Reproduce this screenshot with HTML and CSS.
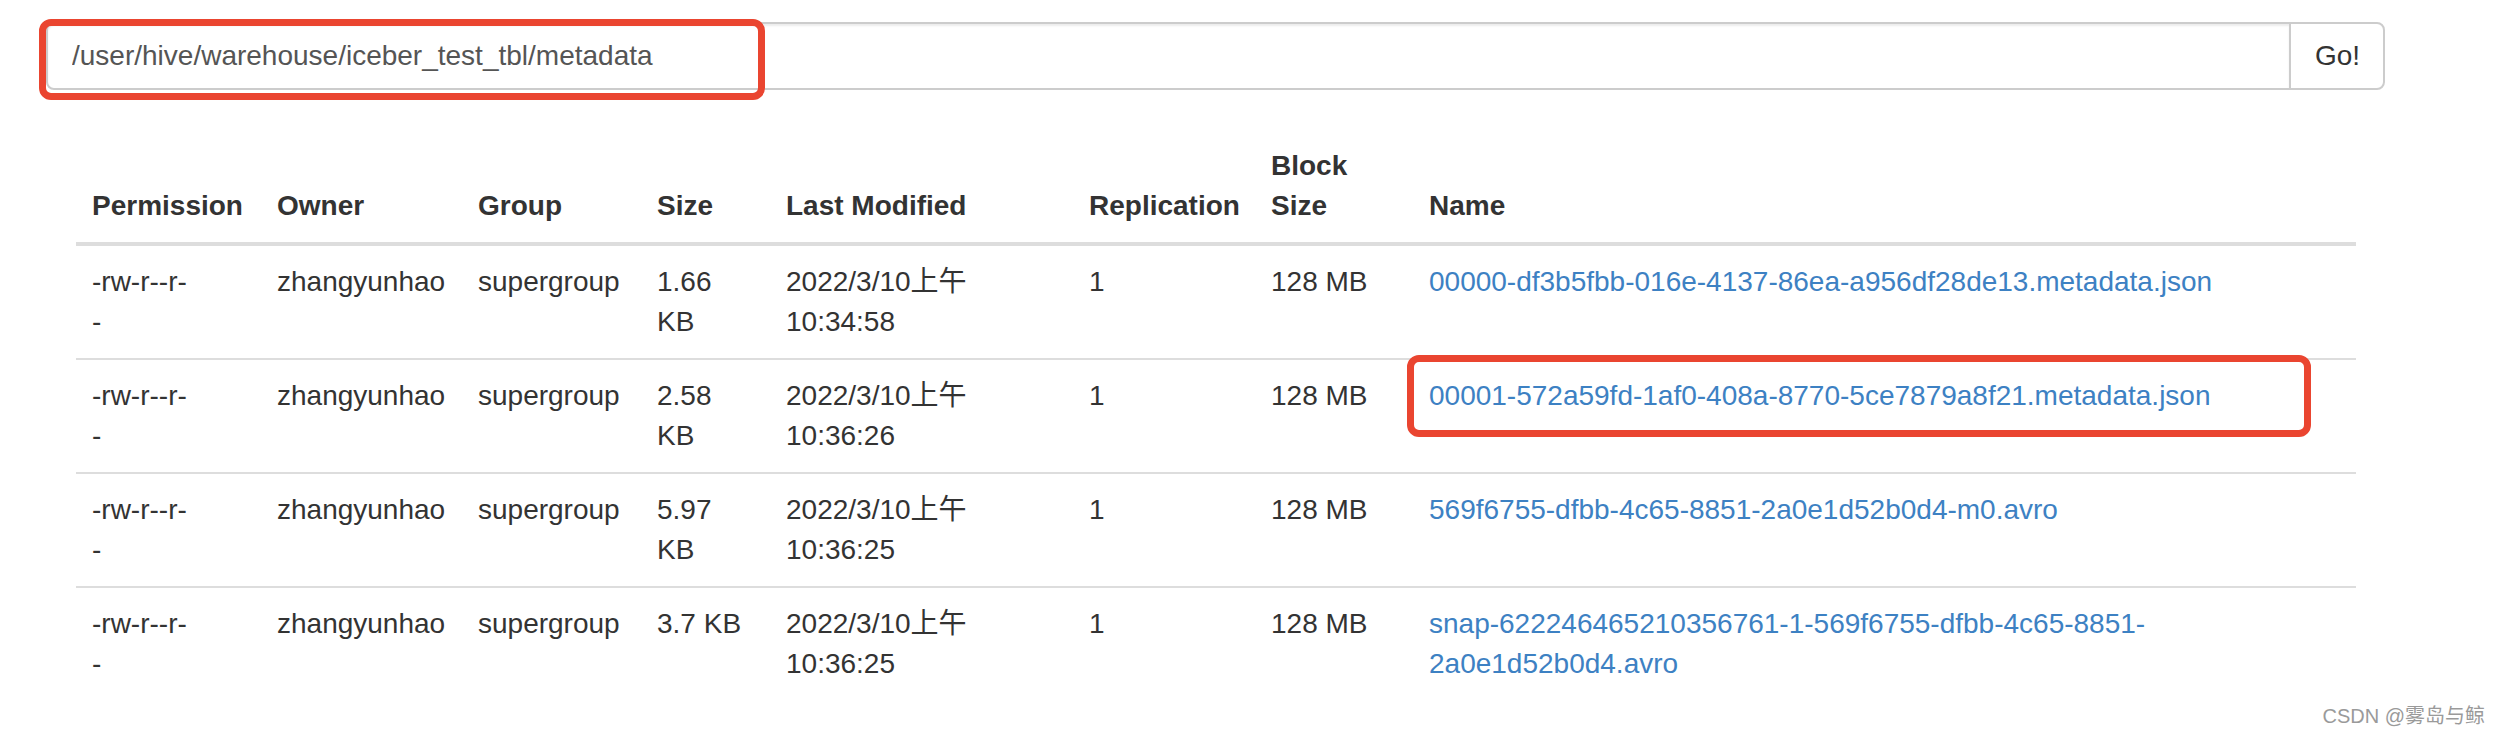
FILE: index.html
```html
<!DOCTYPE html>
<html lang="zh-CN">
<head>
  <meta charset="UTF-8">
  <title>Browse Directory</title>
  <link rel="stylesheet" href="styles.css">
</head>
<body>

<div id="page">
  <!-- 경로 입력 -->
  <div class="input-group">
    <input type="text" class="form-control" id="directory" value="/user/hive/warehouse/iceber_test_tbl/metadata">
    <button class="btn" type="button">Go!</button>
  </div>

  <!-- 파일 목록 -->
  <table id="table-explorer">
    <thead>
      <tr>
        <th class="col-perm">Permission</th>
        <th class="col-owner">Owner</th>
        <th class="col-group">Group</th>
        <th class="col-size">Size</th>
        <th class="col-mod">Last Modified</th>
        <th class="col-repl">Replication</th>
        <th class="col-block">Block Size</th>
        <th class="col-name">Name</th>
      </tr>
    </thead>
    <tbody>
      <tr>
        <td><span class="perm">-rw-r--r--</span></td>
        <td>zhangyunhao</td>
        <td>supergroup</td>
        <td>1.66 KB</td>
        <td>2022/3/10上午10:34:58</td>
        <td>1</td>
        <td>128 MB</td>
        <td><a href="#">00000-df3b5fbb-016e-4137-86ea-a956df28de13.metadata.json</a></td>
      </tr>
      <tr>
        <td><span class="perm">-rw-r--r--</span></td>
        <td>zhangyunhao</td>
        <td>supergroup</td>
        <td>2.58 KB</td>
        <td>2022/3/10上午10:36:26</td>
        <td>1</td>
        <td>128 MB</td>
        <td><a href="#">00001-572a59fd-1af0-408a-8770-5ce7879a8f21.metadata.json</a></td>
      </tr>
      <tr>
        <td><span class="perm">-rw-r--r--</span></td>
        <td>zhangyunhao</td>
        <td>supergroup</td>
        <td>5.97 KB</td>
        <td>2022/3/10上午10:36:25</td>
        <td>1</td>
        <td>128 MB</td>
        <td><a href="#">569f6755-dfbb-4c65-8851-2a0e1d52b0d4-m0.avro</a></td>
      </tr>
      <tr>
        <td><span class="perm">-rw-r--r--</span></td>
        <td>zhangyunhao</td>
        <td>supergroup</td>
        <td>3.7 KB</td>
        <td>2022/3/10上午10:36:25</td>
        <td>1</td>
        <td>128 MB</td>
        <td><a href="#">snap-622246465210356761-1-569f6755-dfbb-4c65-8851-<wbr>2a0e1d52b0d4.avro</a></td>
      </tr>
    </tbody>
  </table>

  <!-- 빨간 표시 -->
  <div class="mark" id="mark-path"></div>
  <div class="mark" id="mark-file"></div>

  <div id="watermark">CSDN @雾岛与鲸</div>
</div>

</body>
</html>
```

FILE: styles.css
```css
body {
  margin: 0;
  background: #fff;
  color: #333;
  font-family: "Liberation Sans", "Noto Sans CJK SC", sans-serif;
  font-size: 28px;
  line-height: 40px;
}
#page {
  position: relative;
  height: 736px;
  padding-top: 22px;
  box-sizing: border-box;
}
.input-group {
  display: flex;
  width: 2339px;
  height: 68px;
  margin-left: 46px;
}
.form-control {
  flex: 1;
  min-width: 0;
  height: 68px;
  box-sizing: border-box;
  padding: 12px 24px;
  border: 2px solid #ccc;
  border-radius: 8px 0 0 8px;
  box-shadow: inset 0 2px 2px rgba(0, 0, 0, .075);
  font-family: inherit;
  font-size: 28px;
  color: #555;
  outline: none;
}
.btn {
  width: 96px;
  height: 68px;
  margin-left: -2px;
  padding: 12px 24px;
  border: 2px solid #ccc;
  border-radius: 0 8px 8px 0;
  background: #fff;
  font-family: inherit;
  font-size: 28px;
  color: #333;
}
#table-explorer {
  width: 2280px;
  margin: 40px 0 0 76px;
  border-collapse: collapse;
  table-layout: fixed;
}
#table-explorer th {
  box-sizing: border-box;
  padding: 16px;
  text-align: left;
  vertical-align: bottom;
  font-weight: bold;
  border-bottom: 4px solid #ddd;
}
#table-explorer td {
  padding: 16px;
  vertical-align: top;
  border-top: 2px solid #ddd;
}
.col-perm { width: 185px; }
.col-owner { width: 201px; }
.col-group { width: 179px; }
.col-size { width: 129px; }
.col-mod { width: 303px; }
.col-repl { width: 182px; }
.col-block { width: 158px; }
.col-name { width: 943px; }
.perm {
  display: block;
  width: 3.5em;
  line-break: anywhere;
}
#table-explorer a {
  color: #3d81c3;
  text-decoration: none;
}
.mark {
  position: absolute;
  border: 7px solid #ea4530;
  border-radius: 12px;
  box-sizing: border-box;
}
#mark-path {
  left: 39px;
  top: 19px;
  width: 726px;
  height: 81px;
}
#mark-file {
  left: 1407px;
  top: 355px;
  width: 904px;
  height: 82px;
}
#watermark {
  position: absolute;
  right: 15px;
  bottom: 8px;
  font-size: 20px;
  line-height: 24px;
  color: #9a9a9a;
  text-shadow: 0 0 1px #fff;
}
```
